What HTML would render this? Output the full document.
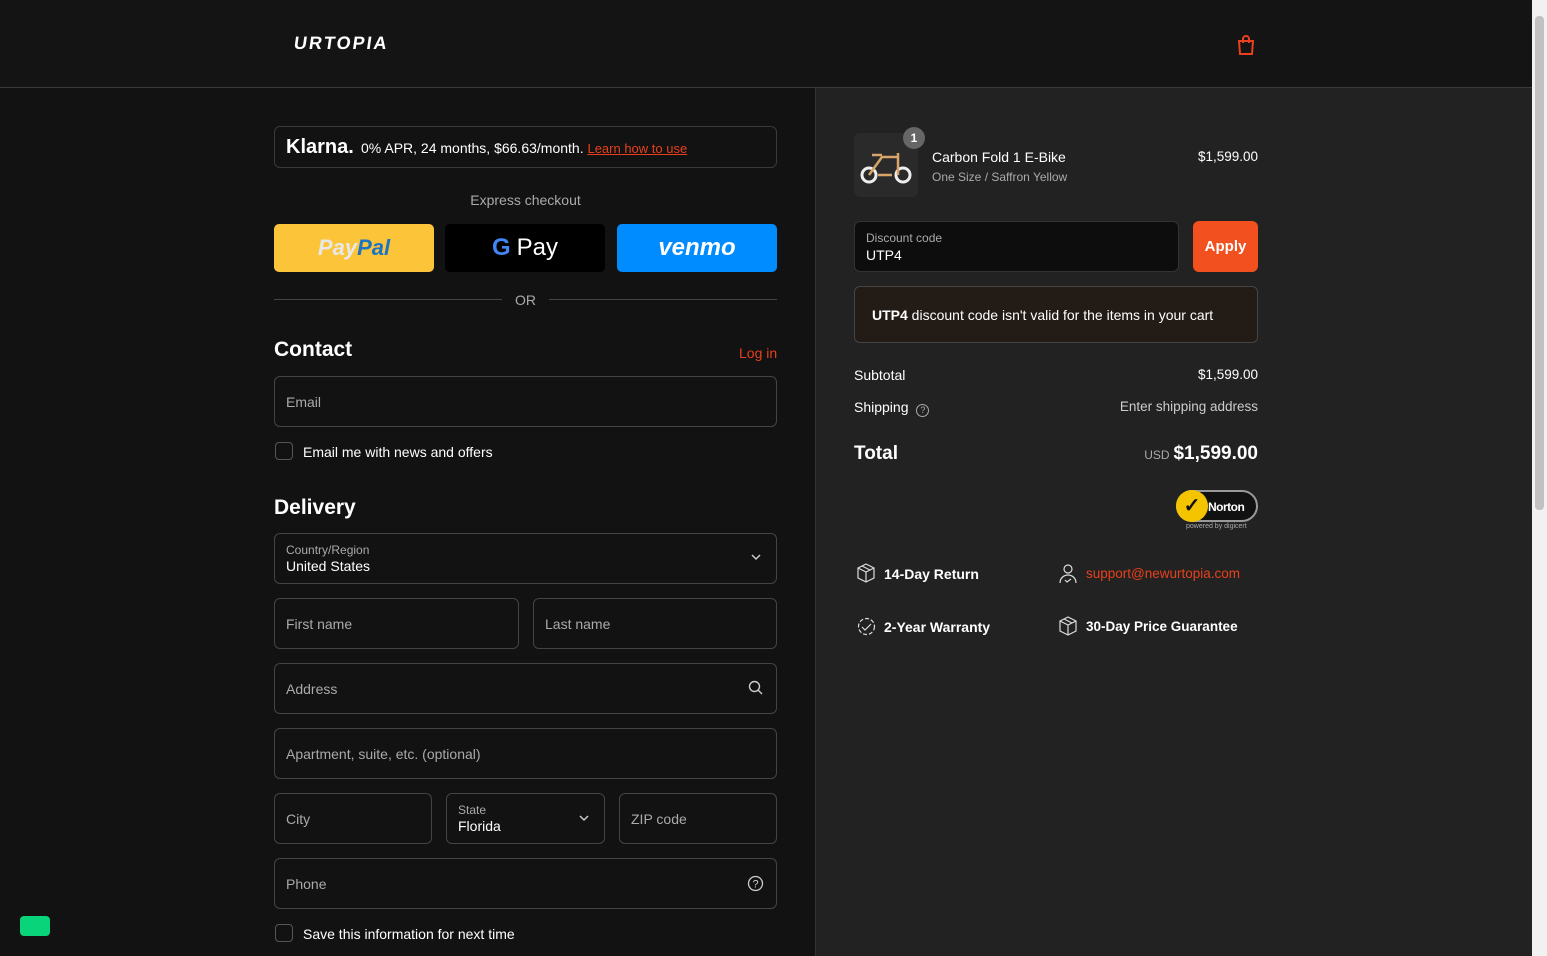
<!DOCTYPE html>
<html><head><meta charset="utf-8"><style>
*{box-sizing:border-box;margin:0;padding:0}
body{width:1547px;height:956px;overflow:hidden;background:#121212;font-family:"Liberation Sans",sans-serif;color:#fff;position:relative;font-size:14px}
.hdr{position:absolute;left:0;top:0;width:1532px;height:88px;background:#141414;border-bottom:1px solid #3a3a3a}
.logo{position:absolute;left:294px;top:33px;font-weight:900;font-size:18px;letter-spacing:2px;transform:skewX(-8deg)}
.right{position:absolute;left:815px;top:88px;width:717px;height:868px;background:#222;border-left:1px solid #333}
.sb{position:absolute;left:1532px;top:0;width:15px;height:956px;background:#f1f1f1}
.sb div{position:absolute;left:3px;top:16px;width:9px;height:494px;background:#c1c1c1;border-radius:4px}
.abs{position:absolute}
.r{position:absolute;right:289px;text-align:right}
.box{position:absolute;border:1px solid #444;border-radius:6px;background:#121212}
.ph{position:absolute;color:#aaa;font-size:14px}
.lbl{font-size:12px;color:#aaa}
.btn{position:absolute;top:224px;width:160px;height:48px;border-radius:5px;display:flex;align-items:center;justify-content:center;font-weight:bold;font-style:italic;font-size:22px}
h2{position:absolute;font-size:21px;font-weight:bold}
.cb{position:absolute;width:18px;height:18px;border:1px solid #555;border-radius:4px}
a{color:#e8401c}
</style></head><body>
<div class="hdr"><div class="logo">URTOPIA</div>
<svg class="abs" style="left:1236px;top:34px" width="20" height="22" viewBox="0 0 20 22"><path d="M3 7h14l-1 13H4z" fill="none" stroke="#e8401c" stroke-width="2"/><path d="M7 9V5a3 3 0 0 1 6 0v4" fill="none" stroke="#e8401c" stroke-width="2"/></svg></div>
<div class="right"></div>
<div class="sb"><div></div></div>

<div class="box" style="left:274px;top:126px;width:503px;height:42px;border-color:#3a3a3a"></div>
<div class="abs" style="left:286px;top:136px;font-weight:bold;font-size:20px">Klarna.</div>
<div class="abs" style="left:361px;top:140px;font-size:14px">0% APR, 24 months, $66.63/month. <a style="font-size:13px;text-decoration:underline">Learn how to use</a></div>
<div class="abs" style="left:274px;top:192px;width:503px;text-align:center;color:#aaa">Express checkout</div>
<div class="btn" style="left:274px;background:#fcc439;color:#1d74c3"><span style="color:#e8e8e8">Pay</span>Pal</div>
<div class="btn" style="left:445px;background:#000;font-style:normal;font-weight:normal;font-size:24px"><span style="font-weight:bold;color:#4285f4;margin-right:6px">G</span>Pay</div>
<div class="btn" style="left:617px;background:#008cff;font-size:24px">venmo</div>
<div class="abs" style="left:274px;top:299px;width:228px;border-top:1px solid #444"></div>
<div class="abs" style="left:549px;top:299px;width:228px;border-top:1px solid #444"></div>
<div class="abs" style="left:515px;top:292px;color:#aaa">OR</div>

<h2 style="left:274px;top:338px">Contact</h2>
<a class="abs" style="left:739px;top:345px">Log in</a>
<div class="box" style="left:274px;top:376px;width:503px;height:51px"></div><div class="ph" style="left:286px;top:394px">Email</div>
<div class="cb" style="left:275px;top:442px"></div><div class="abs" style="left:303px;top:444px">Email me with news and offers</div>

<h2 style="left:274px;top:496px">Delivery</h2>
<div class="box" style="left:274px;top:533px;width:503px;height:51px"></div>
<div class="abs lbl" style="left:286px;top:543px">Country/Region</div><div class="abs" style="left:286px;top:558px">United States</div>
<svg class="abs" style="left:751px;top:553px" width="10" height="8"><path d="M1 2l4 4 4-4" fill="none" stroke="#ccc" stroke-width="1.5"/></svg>
<div class="box" style="left:274px;top:598px;width:245px;height:51px"></div><div class="ph" style="left:286px;top:616px">First name</div>
<div class="box" style="left:533px;top:598px;width:244px;height:51px"></div><div class="ph" style="left:545px;top:616px">Last name</div>
<div class="box" style="left:274px;top:663px;width:503px;height:51px"></div><div class="ph" style="left:286px;top:681px">Address</div>
<svg class="abs" style="left:748px;top:680px" width="16" height="16"><circle cx="6.5" cy="6.5" r="5" fill="none" stroke="#ccc" stroke-width="1.4"/><path d="M10 10l4 4" stroke="#ccc" stroke-width="1.4"/></svg>
<div class="box" style="left:274px;top:728px;width:503px;height:51px"></div><div class="ph" style="left:286px;top:746px">Apartment, suite, etc. (optional)</div>
<div class="box" style="left:274px;top:793px;width:158px;height:51px"></div><div class="ph" style="left:286px;top:811px">City</div>
<div class="box" style="left:446px;top:793px;width:159px;height:51px"></div>
<div class="abs lbl" style="left:458px;top:803px">State</div><div class="abs" style="left:458px;top:818px">Florida</div>
<svg class="abs" style="left:579px;top:814px" width="10" height="8"><path d="M1 2l4 4 4-4" fill="none" stroke="#ccc" stroke-width="1.5"/></svg>
<div class="box" style="left:619px;top:793px;width:158px;height:51px"></div><div class="ph" style="left:631px;top:811px">ZIP code</div>
<div class="box" style="left:274px;top:858px;width:503px;height:51px"></div><div class="ph" style="left:286px;top:876px">Phone</div>
<svg class="abs" style="left:747px;top:875px" width="17" height="17"><circle cx="8.5" cy="8.5" r="7" fill="none" stroke="#ccc" stroke-width="1.3"/><text x="8.5" y="12.5" font-size="11" fill="#ccc" text-anchor="middle" font-family="Liberation Sans">?</text></svg>
<div class="cb" style="left:275px;top:924px"></div><div class="abs" style="left:303px;top:926px">Save this information for next time</div>
<div class="abs" style="left:20px;top:916px;width:30px;height:20px;background:#0ad47a;border-radius:4px"></div>

<!-- right -->
<div class="abs" style="left:854px;top:133px;width:64px;height:64px;background:#2a2a2a;border-radius:6px"></div>
<svg class="abs" style="left:858px;top:145px" width="56" height="40"><circle cx="11" cy="30" r="7" fill="none" stroke="#eee" stroke-width="3"/><circle cx="45" cy="30" r="7" fill="none" stroke="#eee" stroke-width="3"/><path d="M11 30L24 12h16M40 8v22M20 30h14M14 10h10" fill="none" stroke="#d9a46a" stroke-width="2.5"/></svg>
<div class="abs" style="left:903px;top:127px;width:22px;height:22px;border-radius:50%;background:#666;font-size:12px;font-weight:bold;text-align:center;line-height:22px">1</div>
<div class="abs" style="left:932px;top:149px">Carbon Fold 1 E-Bike</div>
<div class="abs" style="left:932px;top:170px;font-size:12px;color:#aaa">One Size / Saffron Yellow</div>
<div class="r" style="top:149px;font-size:13.5px">$1,599.00</div>
<div class="box" style="left:854px;top:221px;width:325px;height:51px;background:#0d0d0d;border-color:#333"></div>
<div class="abs lbl" style="left:866px;top:231px">Discount code</div><div class="abs" style="left:866px;top:247px">UTP4</div>
<div class="abs" style="left:1193px;top:221px;width:65px;height:51px;background:#f2501e;border-radius:6px;font-weight:bold;font-size:15px;text-align:center;line-height:51px">Apply</div>
<div class="box" style="left:854px;top:286px;width:404px;height:57px;background:#231b16;border-color:#444"></div>
<div class="abs" style="left:872px;top:307px"><b>UTP4</b> discount code isn't valid for the items in your cart</div>
<div class="abs" style="left:854px;top:367px">Subtotal</div><div class="r" style="top:367px;font-size:13.5px">$1,599.00</div>
<div class="abs" style="left:854px;top:399px">Shipping <span style="display:inline-block;width:13px;height:13px;border:1px solid #aaa;border-radius:50%;font-size:9px;text-align:center;line-height:11px;color:#aaa;margin-left:4px;vertical-align:-1px">?</span></div>
<div class="r" style="top:399px;color:#ccc;font-size:13.5px">Enter shipping address</div>
<div class="abs" style="left:854px;top:443px;font-size:19px;font-weight:bold">Total</div>
<div class="r" style="top:443px"><span style="font-size:12px;color:#aaa">USD</span> <b style="font-size:19px">$1,599.00</b></div>
<div class="abs" style="left:1176px;top:490px;width:82px;height:32px;border-radius:16px;border:2px solid #999;background:#111"></div>
<div class="abs" style="left:1176px;top:490px;width:32px;height:32px;border-radius:50%;background:#f5c400;color:#111;font-weight:bold;text-align:center;line-height:32px;font-size:20px">✓</div>
<div class="abs" style="left:1208px;top:500px;font-size:12px;font-weight:bold;letter-spacing:-0.5px">Norton</div>
<div class="abs" style="left:1186px;top:523px;font-size:7px;color:#aaa">powered by digicert</div>
<svg class="abs" style="left:856px;top:563px" width="20" height="20" viewBox="0 0 20 20" fill="none" stroke="#ddd" stroke-width="1.2"><path d="M10 1l8 4v10l-8 4-8-4V5zM2 5l8 4 8-4M10 9v10M6 3l8 4"/></svg>
<div class="abs" style="left:884px;top:566px;font-weight:bold">14-Day Return</div>
<svg class="abs" style="left:1058px;top:563px" width="20" height="20" fill="none" stroke="#ddd" stroke-width="1.2"><circle cx="10" cy="6" r="4"/><path d="M2 20c0-5 4-8 8-8s8 3 8 8M7 17l2 2 4-3"/></svg>
<a class="abs" style="left:1086px;top:566px;font-size:13.5px">support@newurtopia.com</a>
<svg class="abs" style="left:856px;top:616px" width="21" height="21" fill="none" stroke="#ddd" stroke-width="1.2"><circle cx="10.5" cy="10.5" r="8" stroke-dasharray="4 2"/><path d="M6 11l3 3 6-6"/></svg>
<div class="abs" style="left:884px;top:619px;font-weight:bold">2-Year Warranty</div>
<svg class="abs" style="left:1058px;top:616px" width="20" height="20" viewBox="0 0 20 20" fill="none" stroke="#ddd" stroke-width="1.2"><path d="M10 1l8 4v10l-8 4-8-4V5zM2 5l8 4 8-4M10 9v10M6 3l8 4"/></svg>
<div class="abs" style="left:1086px;top:619px;font-weight:bold;font-size:13.5px">30-Day Price Guarantee</div>
</body></html>
